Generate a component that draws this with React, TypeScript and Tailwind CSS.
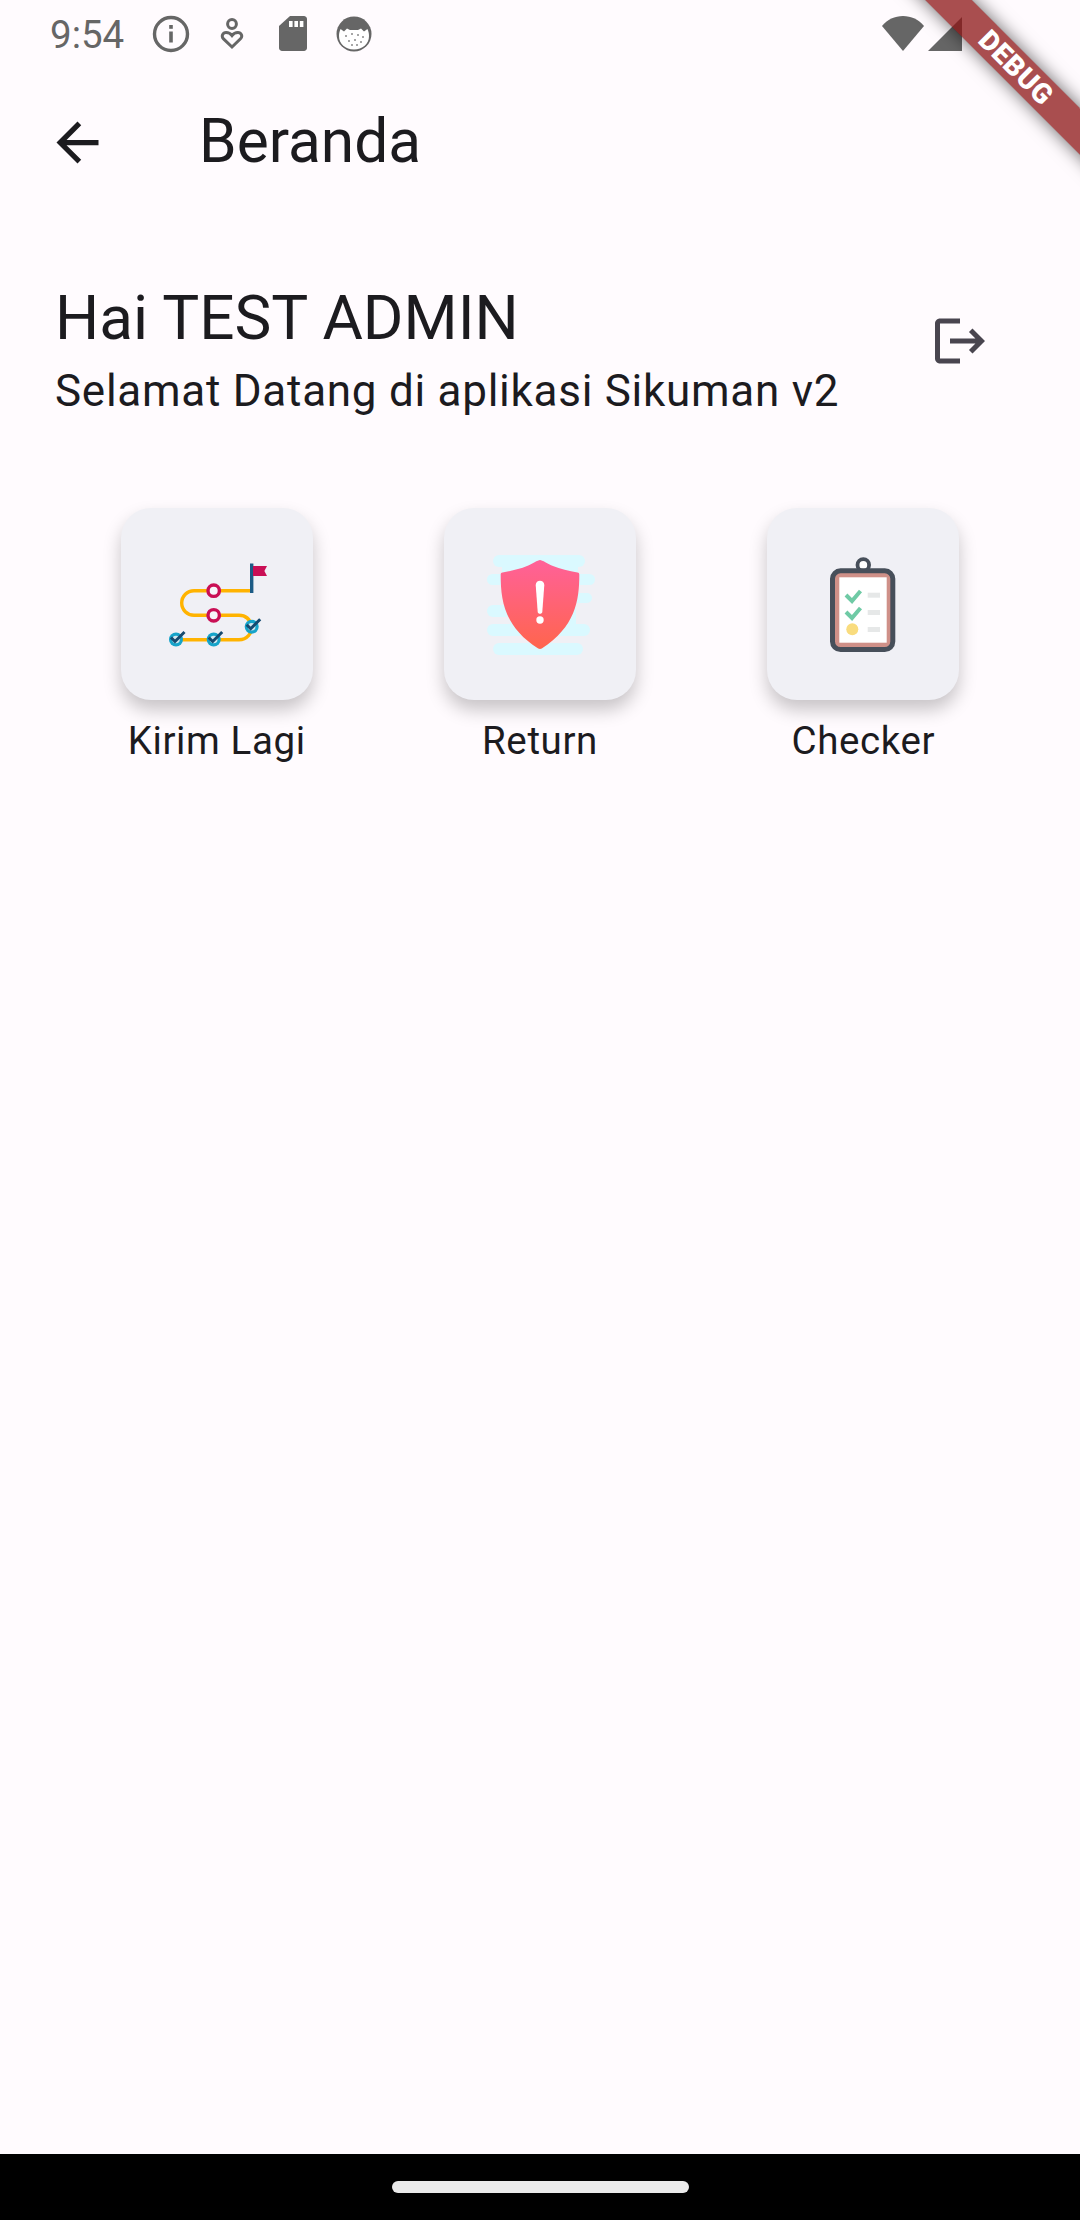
function StatusIcons() {
  return (
    <>
      <svg width="38" height="38" viewBox="0 0 38 38" className="ml-[29px]" fill="none">
        <circle cx="19" cy="19" r="16.5" stroke="#666" strokeWidth="3.4" />
        <rect x="17.2" y="16.5" width="3.6" height="11" fill="#666" />
        <rect x="17.2" y="10" width="3.6" height="3.8" fill="#666" />
      </svg>
      <svg width="24" height="34" viewBox="0 0 24 34" className="ml-[30px]" fill="none" stroke="#666" strokeWidth="3">
        <circle cx="12" cy="7" r="4.4" />
        <path d="M12 30 3.5 21.8c-2.6-2.6-.6-6.3 2.6-6.3 2.4 0 4.4 1 5.9 3 1.5-2 3.5-3 5.9-3 3.2 0 5.2 3.7 2.6 6.3z" />
      </svg>
      <svg width="28" height="35" viewBox="0 0 28 35" className="ml-[35px]">
        <path d="M11 0h14c1.6 0 3 1.4 3 3v29c0 1.6-1.4 3-3 3H3c-1.6 0-3-1.4-3-3V10z" fill="#666" />
        <rect x="10" y="5" width="3.6" height="6" fill="#fff" />
        <rect x="15.4" y="5" width="3.6" height="6" fill="#fff" />
        <rect x="20.8" y="5" width="3.6" height="6" fill="#fff" />
      </svg>
      <svg width="36" height="36" viewBox="0 0 36 36" className="ml-[29px]">
        <circle cx="18" cy="18" r="17.5" fill="#666" />
        <path d="M3 20c0-3 .6-5 1.600-7l3.400 2.500 3-3 3 1.500h8l3-1.500 3 3 3.400-2.500c1 2 1.600 4 1.600 7 0 8-6.500 13.500-15 13.500S3 28 3 20z" fill="#fff" />
        <g fill="#888">
          <circle cx="10" cy="20" r="1" /><circle cx="16" cy="18" r="1" /><circle cx="22" cy="19" r="1" /><circle cx="27" cy="21" r="1" />
          <circle cx="13" cy="25" r="1" /><circle cx="19" cy="24" r="1" /><circle cx="25" cy="26" r="1" /><circle cx="16" cy="29" r="1" /><circle cx="21" cy="29" r="1" />
        </g>
      </svg>
    </>
  );
}

function RouteIllustration() {
  const ticks = [
    [19, 95.5],
    [56.7, 95.5],
    [94.7, 82.7],
  ];
  return (
    <svg width="120" height="120" viewBox="0 0 120 120" fill="none">
      <path d="M95 46.7H37a12.3 12.3 0 0 0 0 24.6H82c7 0 11 4 13 11 0 7-5 13.5-13 13.5H19" stroke="#ffb300" strokeWidth="3.4" />
      <path d="M94.7 19.5v29.5" stroke="#1c5b85" strokeWidth="3.4" />
      <path d="M96 22h14l-2.6 5 2.6 5H96z" fill="#c90f55" />
      <circle cx="56.7" cy="46.7" r="5.7" fill="#f6f6fa" stroke="#c90f55" strokeWidth="3.4" />
      <circle cx="56.7" cy="71.3" r="5.7" fill="#f6f6fa" stroke="#c90f55" strokeWidth="3.4" />
      {ticks.map(([x, y]) => (
        <g key={x}>
          <circle cx={x} cy={y} r="7" fill="#16a3c9" />
          <circle cx={x} cy={y} r="3.8" fill="#d3e7ee" />
          <path d={`M${x - 5} ${y - 2}l4 4 9.5-9.5`} stroke="#164a70" strokeWidth="3" />
        </g>
      ))}
    </svg>
  );
}

function ShieldIllustration() {
  return (
    <svg width="120" height="120" viewBox="0 0 120 120">
      <defs>
        <linearGradient id="shield" x1="0" y1="0" x2="0" y2="1">
          <stop offset="0" stopColor="#ff6199" />
          <stop offset="1" stopColor="#ff654d" />
        </linearGradient>
      </defs>
      <g fill="#daf9ff">
        <rect x="13" y="11" width="92" height="12" rx="6" />
        <rect x="7" y="30" width="108" height="11" rx="5.5" />
        <rect x="88" y="49" width="24" height="10" rx="5" />
        <rect x="7" y="61" width="30" height="12" rx="6" />
        <rect x="7" y="80" width="103" height="12" rx="6" />
        <rect x="13" y="99" width="90" height="12" rx="6" />
        <path d="M22 20h76v22h-2v50H30V50h-8z" />
      </g>
      <path d="M60 16c-2 0-8 4-13 6-7 3-16 5-24.500 6.500-1.500.3-1.800 1-1.800 2.500 0 26 4 52 37.500 73.500 1 .6 2.600.6 3.600 0C95 83 99.300 57 99.300 31c0-1.500-.3-2.200-1.800-2.500C89 27 80 25 73 22c-5-2-11-6-13-6z" fill="url(#shield)" />
      <path d="M55.700 41c0-5.800 8.600-5.800 8.600 0L62.300 68c-.2 2.400-4.400 2.400-4.600 0z" fill="#fff" />
      <circle cx="60" cy="76" r="3.7" fill="#fff" />
    </svg>
  );
}

function ClipboardIllustration() {
  return (
    <svg width="120" height="120" viewBox="0 0 120 120" fill="none">
      <circle cx="60.3" cy="21" r="5.8" fill="#fff" stroke="#474f5a" strokeWidth="3.8" />
      <rect x="29.5" y="26.8" width="60.3" height="78.7" rx="8" fill="#cf9088" stroke="#474f5a" strokeWidth="5" />
      <rect x="36.3" y="33.3" width="47.4" height="65.4" fill="#fff" />
      <path d="M43 51l6 6 8.5-10" stroke="#6fcaa5" strokeWidth="4" />
      <path d="M43 68l6 6 8.5-10" stroke="#6fcaa5" strokeWidth="4" />
      <circle cx="49.3" cy="85.3" r="6" fill="#f9dc7e" />
      <rect x="64.7" y="48.7" width="12.3" height="5" fill="#e6e8e8" />
      <rect x="64.7" y="66" width="12.3" height="5" fill="#e6e8e8" />
      <rect x="64.7" y="83" width="12.3" height="5" fill="#e6e8e8" />
    </svg>
  );
}

function MenuItem({ label, children }: { label: string; children: React.ReactNode }) {
  return (
    <div className="flex flex-col items-center">
      <div className="flex h-[192px] w-[192px] items-center justify-center rounded-[30px] bg-[#f0f0f5] shadow-[0_10px_18px_rgba(0,0,0,0.22)]">
        {children}
      </div>
      <span className="mt-[19px] text-[38.5px] leading-[44px] tracking-[0.6px] text-[#1c1b1f]">{label}</span>
    </div>
  );
}

export default function App() {
  return (
    <div className="relative flex h-[2220px] w-[1080px] flex-col overflow-hidden bg-[#fffbfe] font-[Roboto,sans-serif]">
      <div className="flex h-[63px] shrink-0 items-center pl-[50px] pr-[118px] pt-[4px]">
        <span className="w-[73px] pt-[3px] text-[38.5px] leading-none text-[#666]">9:54</span>
        <StatusIcons />
        <div className="ml-auto flex items-center gap-[4px]">
          <svg width="42" height="35" viewBox="0 0 42 35">
            <path d="M0 10C5 3.5 13 0 21 0s16 3.5 21 10L21 35z" fill="#666" />
          </svg>
          <svg width="34" height="34" viewBox="0 0 34 34">
            <path d="M34 0v34H0z" fill="#666" />
          </svg>
        </div>
      </div>

      <header className="flex h-[147px] shrink-0 items-center pl-[46px] pt-[12px]">
        <svg width="63" height="63" viewBox="0 0 24 24" fill="#1c1b1f">
          <path d="M20 11H7.83l5.59-5.59L12 4l-8 8 8 8 1.41-1.41L7.83 13H20v-2z" />
        </svg>
        <h1 className="ml-[90px] text-[60.4px] font-normal leading-none text-[#1c1b1f]">Beranda</h1>
      </header>

      <main className="flex-1">
        <section className="mt-[71px] flex items-start justify-between pl-[55px] pr-[90px]">
          <div>
            <p className="text-[62px] leading-[74px] text-[#1c1b1f]">Hai TEST ADMIN</p>
            <p className="mt-[11px] text-[44px] leading-[50px] tracking-[0.73px] text-[#1c1b1f]">Selamat Datang di aplikasi Sikuman v2</p>
          </div>
          <svg width="60" height="60" viewBox="0 0 24 24" fill="#49454f" className="mt-[30px]">
            <path d="M17 7l-1.41 1.41L18.17 11H8v2h10.17l-2.58 2.58L17 17l5-5zM4 5h8V3H4c-1.1 0-2 .9-2 2v14c0 1.1.9 2 2 2h8v-2H4V5z" />
          </svg>
        </section>

        <section className="mt-[92px] grid grid-cols-3 px-[55px]">
          <MenuItem label="Kirim Lagi"><RouteIllustration /></MenuItem>
          <MenuItem label="Return"><ShieldIllustration /></MenuItem>
          <MenuItem label="Checker"><ClipboardIllustration /></MenuItem>
        </section>
      </main>

      <div className="flex h-[66px] shrink-0 items-center justify-center bg-black">
        <div className="h-[12px] w-[297px] rounded-full bg-[#eaeaea]" />
      </div>

      <div className="pointer-events-none absolute inset-0 overflow-hidden">
        <div className="absolute left-[866px] top-[51px] flex h-[33px] w-[300px] rotate-45 items-center justify-center bg-[rgba(140,20,20,0.75)] shadow-[0_0_18px_rgba(0,0,0,0.6)]">
          <span className="text-[28px] font-black leading-none tracking-[0.5px] text-white">DEBUG</span>
        </div>
      </div>
    </div>
  );
}
